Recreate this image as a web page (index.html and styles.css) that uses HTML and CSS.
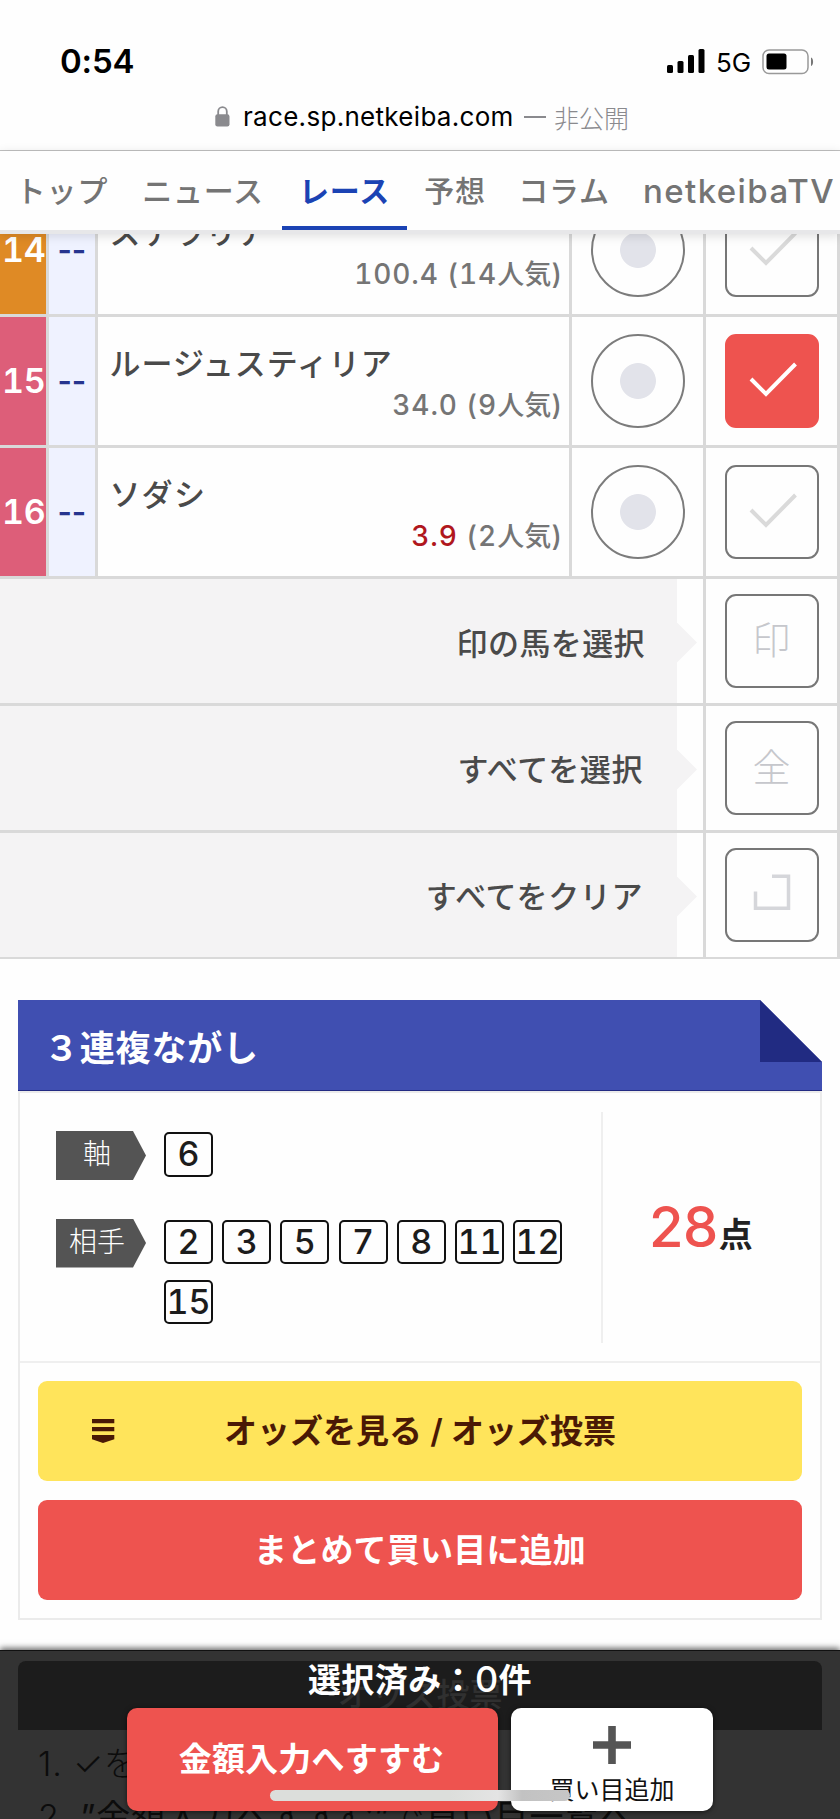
FILE: index.html
```html
<!DOCTYPE html>
<html lang="ja">
<head>
<meta charset="utf-8">
<title>netkeiba</title>
<link rel="stylesheet" href="styles.css">
</head>
<body>
<div class="screen">
  <header class="browser">
    <div class="status">
      <span class="clock">0:54</span>
      <div class="status-right">
        <svg class="signal" width="38" height="24" viewBox="0 0 38 24"><rect x="0" y="16" width="6" height="8" rx="1.5"/><rect x="10.5" y="12" width="6" height="12" rx="1.5"/><rect x="21" y="6" width="6" height="18" rx="1.5"/><rect x="31.500" y="0" width="6" height="24" rx="1.500"/></svg>
        <span class="net">5G</span>
        <svg class="battery" width="52" height="26" viewBox="0 0 52 26"><rect x="1" y="1" width="45" height="23.500" rx="6" fill="none" stroke="#999" stroke-width="1.500"/><rect x="4.500" y="4.500" width="20" height="16" rx="2.500"/><path d="M49 8.500c2.800 1 2.800 7.500 0 8.500z" fill="#777"/></svg>
      </div>
    </div>
    <div class="address">
      <svg class="lock" width="15" height="21" viewBox="0 0 15 21"><path d="M3.200 9V5.500a4.200 4.200 0 0 1 8.600 0V9" fill="none" stroke="#8a8a8e" stroke-width="1.800"/><rect x="0.300" y="8.300" width="14.200" height="12.200" rx="2.200" fill="#8a8a8e"/></svg>
      <span class="domain">race.sp.netkeiba.com</span>
      <span class="private"><i class="dash"></i>非公開</span>
    </div>
  </header>
  <nav class="tabs">
    <a class="tab t1">トップ</a><a class="tab t2">ニュース</a><a class="tab t3 active">レース</a><a class="tab t4">予想</a><a class="tab t5">コラム</a><a class="tab t6">netkeibaTV</a>
  </nav>
  <main class="table">
    <div class="row first">
      <div class="num orange">14</div><div class="mark">--</div>
      <div class="horse"><p class="name">ステラリア</p><p class="odds">100.4 (14<b>人気</b>)</p></div>
      <div class="cell"><span class="circle"></span></div>
      <div class="cell"><span class="box"><svg width="94" height="94" viewBox="0 0 94 94"><path d="M26 45l15 15 29.500-30"/></svg></span></div>
    </div>
    <div class="row">
      <div class="num">15</div><div class="mark">--</div>
      <div class="horse"><p class="name">ルージュスティリア</p><p class="odds">34.0 (9<b>人気</b>)</p></div>
      <div class="cell"><span class="circle"></span></div>
      <div class="cell"><span class="box on"><svg width="94" height="94" viewBox="0 0 94 94"><path d="M26 45l15 15 29.500-30"/></svg></span></div>
    </div>
    <div class="row">
      <div class="num">16</div><div class="mark">--</div>
      <div class="horse"><p class="name">ソダシ</p><p class="odds"><em>3.9</em> (2<b>人気</b>)</p></div>
      <div class="cell"><span class="circle"></span></div>
      <div class="cell"><span class="box"><svg width="94" height="94" viewBox="0 0 94 94"><path d="M26 45l15 15 29.500-30"/></svg></span></div>
    </div>
    <div class="bulk">
      <div class="bulk-label"><span>印の馬を選択</span></div>
      <div class="cell"><span class="box glyph">印</span></div>
    </div>
    <div class="bulk kana">
      <div class="bulk-label"><span>すべてを選択</span></div>
      <div class="cell"><span class="box glyph">全</span></div>
    </div>
    <div class="bulk kana last">
      <div class="bulk-label"><span>すべてをクリア</span></div>
      <div class="cell"><span class="box"><svg width="94" height="94" viewBox="0 0 94 94"><path class="thin" d="M47 28.300H63.500V60.300H30.500V43.500"/></svg></span></div>
    </div>
  </main>
  <section class="card">
    <h2 class="card-title"><span>３連複ながし</span></h2>
    <div class="card-body">
      <div class="summary">
        <div class="picks">
          <div class="pick"><span class="tag">軸</span><div class="nums"><i>6</i></div></div>
          <div class="pick"><span class="tag">相手</span><div class="nums"><i>2</i><i>3</i><i>5</i><i>7</i><i>8</i><i>11</i><i>12</i><i>15</i></div></div>
        </div>
        <div class="points"><strong>28</strong><span>点</span></div>
      </div>
      <div class="actions">
        <a class="btn yellow"><svg class="ribbon" width="24" height="26" viewBox="0 0 24 26"><path d="M1 1h22.300v4.300H1zM1 9h22.300v4.300H1zM1 17h22.300v4.300L12 25 1 21.300z"/></svg><span>オッズを見る / オッズ投票</span></a>
        <a class="btn red"><span>まとめて買い目に追加</span></a>
      </div>
    </div>
  </section>
  <section class="guide">
    <h3 class="guide-title">オッズ投票</h3>
    <p class="step">1. ✓を</p>
    <p class="step">2. <b>”金額入力へすすむ”</b>で<b>買い目一覧へ</b></p>
  </section>
  <footer class="bar">
    <p class="count">選択済み：<span class="zero">0</span>件</p>
    <div class="bar-btns">
      <a class="go"><span>金額入力へすすむ</span></a>
      <a class="add"><svg width="38" height="38" viewBox="0 0 38 38"><path d="M15.200 0h7.600v15.200H38v7.600H22.800V38h-7.600V22.800H0v-7.600h15.200z"/></svg><span>買い目追加</span></a>
    </div>
  </footer>
  <div class="home"></div>
</div>
</body>
</html>
```
FILE: styles.css
```css
* { box-sizing: border-box; }
body, p, h2, h3 { margin: 0; }
body { background: #fefefe; }
.screen {
  position: relative;
  width: 840px;
  height: 1819px;
  overflow: hidden;
  font-family: Inter, "Noto Sans CJK JP", sans-serif;
  color: #4a4a4a;
  background: #fefefe;
}
span, a, p { white-space: nowrap; }

/* browser chrome */
.browser { height: 151px; border-bottom: 1px solid #c0c0c0; }
.status { display: flex; justify-content: space-between; height: 95px; padding: 37px 26px 0 60px; color: #000; }
.clock { font-size: 33px; font-weight: 600; line-height: 48px; letter-spacing: -.2px; }
.status-right { display: flex; align-items: flex-start; padding-top: 12px; }
.signal { margin-right: 11px; }
.net { width: 36px; margin-right: 10px; font-size: 26px; line-height: 27px; }
.address { display: flex; align-items: center; height: 43px; padding-left: 215px; }
.lock { margin-right: 13px; }
.domain { width: 270px; font-size: 26px; color: #000; letter-spacing: .3px; }
.private { display: flex; align-items: center; margin-left: 11px; font-size: 25px; font-weight: 300; color: #8a8a8e; }
.dash { width: 22px; height: 2px; margin-right: 8px; background: #8a8a8e; }

/* tabs */
.tabs {
  position: relative;
  z-index: 2;
  display: flex;
  height: 83px;
  border-bottom: 4px solid #e7e7e9;
  background: #fefefe;
  box-shadow: 0 2px 10px rgba(0, 0, 0, .13);
}
.tab { height: 79px; font-size: 30px; font-weight: 500; line-height: 80px; letter-spacing: .8px; color: #747474; text-align: center; }
.t1 { width: 124px; }
.t2 { width: 158px; }
.t3 { width: 125px; }
.t4 { width: 96px; }
.t5 { width: 122px; }
.t6 { width: 215px; padding-left: 18px; font-size: 33px; letter-spacing: 1.400px; text-align: left; }
.active { color: #1b43b4; font-weight: 700; border-bottom: 4px solid #1b43b4; }

/* entry table */
.table { height: 725px; overflow: hidden; }
.row, .bulk { display: grid; border-bottom: 3px solid #d9d9d9; }
.row { grid-template-columns: 49px 48.500px 474.500px 134px 134px; height: 131px; }
.first { margin-top: -48px; }
.num, .mark, .horse, .cell, .bulk-label { border-right: 3px solid #d9d9d9; }
.num {
  display: flex; align-items: center; padding: 0 0 2px 2px;
  font-size: 34px; font-weight: 600; letter-spacing: -.3px; font-variant-numeric: tabular-nums; color: #fff; background: #dd5e79;
}
.orange { background: #df8a25; }
.mark { display: flex; align-items: center; justify-content: center; padding-bottom: 2px; font-size: 31px; font-weight: 600; letter-spacing: -.3px; color: #26358f; background: #eff2ff; }
.name { height: 64px; padding: 24px 0 0 12px; font-size: 31px; font-weight: 500; line-height: 46px; letter-spacing: 1px; }
.odds { padding: 4px 6px 0 0; font-size: 28px; font-weight: 500; line-height: 40px; letter-spacing: .9px; font-variant-numeric: tabular-nums; text-align: right; color: #757575; }
.odds b { font-size: 27px; font-weight: 500; letter-spacing: 0; }
.odds em { font-style: normal; color: #b0171d; }
.cell { display: flex; align-items: center; justify-content: center; }
.row .cell { padding-bottom: 1px; }
.circle {
  width: 94px; height: 94px; border: 2px solid #7c7c7c; border-radius: 50%;
  background: radial-gradient(circle, #e2e3ea 17.500px, transparent 18.300px);
}
.box { display: flex; align-items: center; justify-content: center; width: 94px; height: 94px; border: 2px solid #777; border-radius: 11px; }
.box svg { flex: none; }
.box path { fill: none; stroke: #dadada; stroke-width: 4; }
.box path.thin { stroke: #d5d6da; stroke-width: 3.500; }
.box.on { border-color: #ee534f; background: #ee534f; }
.box.on path { stroke: #fff; }
.bulk { grid-template-columns: 706px 134px; height: 127px; }
.bulk .cell { padding-bottom: 1px; }
.bulk.last { height: 126px; border-bottom-width: 2px; }
.bulk-label {
  display: flex; align-items: center; justify-content: flex-end; padding-right: 60px;
  font-size: 31px; font-weight: 500; letter-spacing: .4px;
  background: linear-gradient(#f4f3f4, #f4f3f4) 0 0 / 677px 100% no-repeat;
}
.bulk-label::after { content: ""; width: 20px; height: 40px; margin: 3px -54px 0 32px; background: #f4f3f4; clip-path: polygon(0 0, 100% 50%, 0 100%); }
.kana .bulk-label span { margin-right: 2px; padding-bottom: 1px; letter-spacing: .6px; }
.glyph { padding-bottom: 6px; font-size: 38px; font-weight: 300; color: #c6c7cc; }

/* result card */
.card { width: 804px; margin: 41px 0 0 18px; }
.card-title {
  display: flex; align-items: center; justify-content: space-between; height: 91px; padding-left: 26px;
  border-bottom: 1px solid #232b83; background: #404fb1;
  font-size: 35px; font-weight: 600; letter-spacing: .8px; color: #fff;
  clip-path: polygon(0 0, 742px 0, 100% 62px, 100% 100%, 0 100%);
}
.card-title::after { content: ""; align-self: flex-start; width: 62px; height: 62px; background: #212b82; }
.card-body { height: 529px; border: 2px solid #ebebeb; }
.summary { display: flex; height: 270px; padding-top: 19px; border-bottom: 2px solid #efefef; }
.picks { width: 583px; height: 231px; padding: 19px 0 0 36px; border-right: 2px solid #efefef; }
.pick { display: flex; gap: 18px; height: 87.500px; }
.tag {
  width: 90px; height: 49px; padding-right: 8px; background: #545454;
  font-size: 28px; font-weight: 300; line-height: 47px; color: #fff; text-align: center;
  clip-path: polygon(0 0, 77px 0, 100% 50%, 77px 100%, 0 100%);
}
.nums { display: flex; flex-wrap: wrap; align-content: flex-start; width: 410px; gap: 15.500px 9.200px; padding-top: 1px; }
.nums i { width: 49px; height: 44.500px; border: 2px solid #111; border-radius: 5px; font-size: 34px; font-weight: 500; font-style: normal; font-variant-numeric: tabular-nums; line-height: 39px; text-align: center; color: #1c1c1c; }
.points { display: flex; align-items: baseline; padding: 76px 0 0 46px; }
.points strong { font-size: 56px; font-weight: 500; line-height: 78px; color: #ee534f; letter-spacing: -.5px; }
.points span { margin-left: 1px; font-size: 34px; font-weight: 600; color: #222; }
.actions { display: grid; gap: 19px; padding: 18px; }
.btn { position: relative; display: flex; align-items: center; justify-content: center; height: 100px; border-radius: 9px; font-size: 33px; font-weight: 600; padding-bottom: 4px; }
.yellow { background: #ffe45b; color: #4a1905; }
.ribbon { position: absolute; left: 53px; top: 37px; fill: #4a1905; }
.red { background: #ee534f; color: #fff; letter-spacing: .2px; }

/* guide list under the voting bar */
.guide { height: 170px; margin-top: 30px; padding: 11px 18px; background: #333; color: #0c0c0c; font-size: 34px; font-weight: 300; }
.guide-title { height: 69px; padding-top: 9px; border-radius: 8px 8px 0 0; background: #1c1c1c; font-size: 33px; font-weight: 500; line-height: 50px; text-align: center; color: #303030; }
.step { height: 53px; padding-left: 20px; line-height: 68px; letter-spacing: .8px; }

/* voting bar */
.bar { position: absolute; left: 0; right: 0; top: 1650px; height: 169px; box-shadow: 0 -2px 6px rgba(0, 0, 0, .6); border-top: 1px solid #111; }
.count { height: 57px; padding-top: 6px; font-size: 33px; font-weight: 600; line-height: 46px; letter-spacing: .4px; text-align: center; color: #fff; }
.zero { font-size: 36px; font-weight: 500; line-height: 1; }
.bar-btns { display: flex; gap: 13px; padding-left: 127px; }
.go, .add { display: flex; align-items: center; justify-content: center; height: 103px; border-radius: 10px; box-shadow: 0 1px 5px rgba(0, 0, 0, .6); }
.go { width: 371px; padding: 0 2px 5px 0; font-size: 33px; font-weight: 600; letter-spacing: .2px; color: #fff; background: #ee534f; }
.add { flex-direction: column; justify-content: flex-start; width: 202px; padding-top: 18px; gap: 7px; font-size: 25px; line-height: 38px; color: #111; background: #fff; }
.add svg { flex: none; fill: #555; }
.home { position: absolute; left: 270px; top: 1790px; width: 300px; height: 11px; border-radius: 6px; background: linear-gradient(90deg, #dcdedb 0 60%, #e4e4e4 76%, #c2c2c2 84%, #c6c6c6); }
```
